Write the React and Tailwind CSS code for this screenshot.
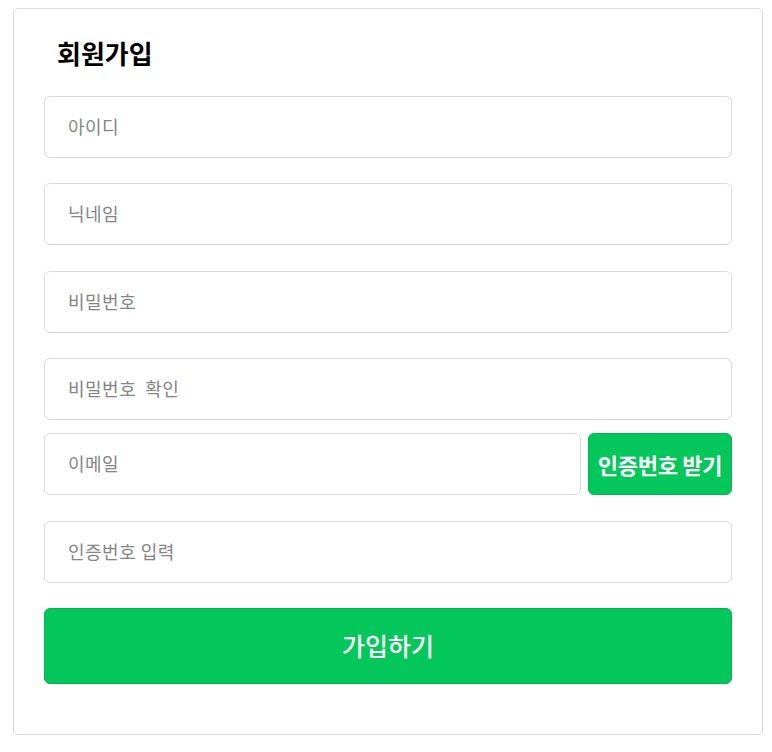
import { useState } from 'react';

const font = { fontFamily: '"Noto Sans CJK KR", "Noto Sans", sans-serif' };

const Field = ({ placeholder, className = '' }) => (
  <input
    type="text"
    placeholder={placeholder}
    className={`h-[62px] w-full rounded-[6px] border border-[#dadada] bg-white px-[23px] pb-[3px] text-[18px] tracking-[0.5px] text-[#222] placeholder:text-[#858585] outline-none ${className}`}
  />
);

const App = () => {
  const [sent, setSent] = useState(false);

  return (
    <div className="min-h-[752px] bg-white" style={font}>
      <div className="ml-[13px] mt-[8px] w-[750px] rounded-[5px] border border-[#dcdcdc] px-[30px] pt-[28px] pb-[50px]">
        <h1 className="mb-[27px] h-[32px] pl-[13px] text-[26px] font-bold leading-[32px] text-black">
          회원가입
        </h1>

        <div className="flex flex-col">
          <Field placeholder="아이디" />
          <Field placeholder="닉네임" className="mt-[25px]" />
          <Field placeholder="비밀번호" className="mt-[26px]" />
          <Field placeholder="비밀번호  확인" className="mt-[25px]" />

          <div className="mt-[13px] flex gap-[7px]">
            <Field placeholder="이메일" className="flex-1" />
            <button
              onClick={() => setSent(true)}
              className="h-[62px] w-[144px] shrink-0 rounded-[6px] border border-[#02b552] bg-[#03c75a] text-[22px] font-bold tracking-[-0.3px] text-white whitespace-nowrap"
            >
              인증번호 받기
            </button>
          </div>

          <Field placeholder="인증번호 입력" className="mt-[26px]" />

          <button className="mt-[25px] h-[76px] w-full rounded-[6px] border border-[#02b552] bg-[#03c75a] text-[25px] font-medium text-white">
            가입하기
          </button>
        </div>
      </div>
    </div>
  );
};

export default App;
